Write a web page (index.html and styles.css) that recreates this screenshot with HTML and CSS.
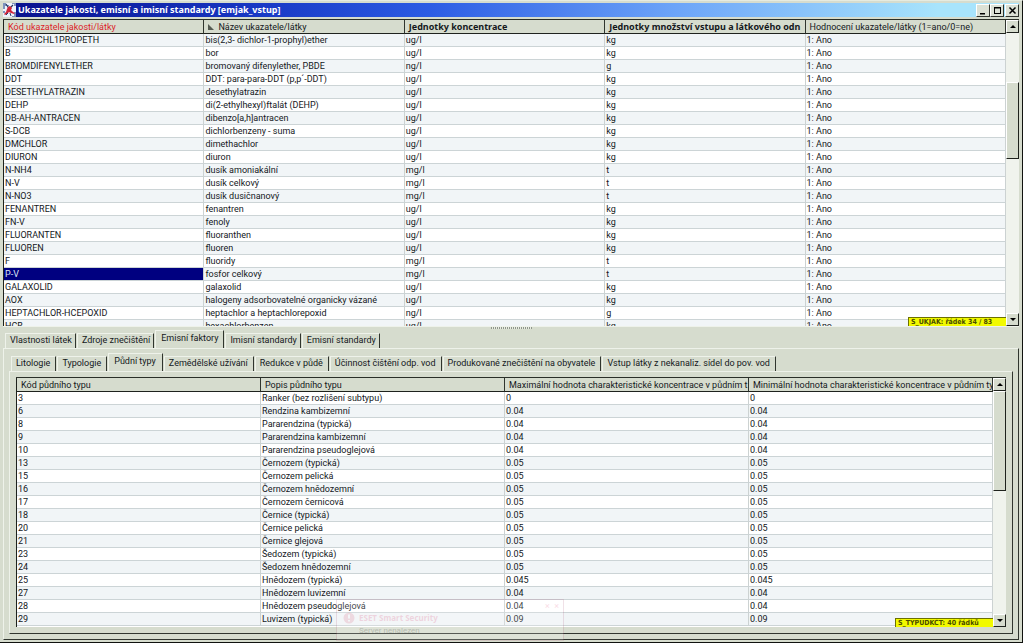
FILE: index.html
```html
<!DOCTYPE html>
<html lang="cs">
<head>
<meta charset="utf-8">
<title>Ukazatele jakosti, emisní a imisní standardy</title>
<link rel="stylesheet" href="styles.css">
</head>
<body>
<main class="window">
  <header class="titlebar">
    <svg class="app-icon" width="13" height="14" viewBox="0 0 13 14" aria-hidden="true">
      <rect width="13" height="14" fill="#eef3fb"/>
      <path d="M0 0h3v2h3v1H2v3H0zM9 0h4v3h-2V1H9zM0 8h2v2H0zM11 9h2v5H9v-1h2z" fill="#7d93bd"/>
      <path d="M3 1l2 3 1 2M10 2L7 5" stroke="#25345e" stroke-width="1.2" fill="none"/>
      <path d="M5 4l2-1 2 2-1 2 2 2 2 1-1 1-3-1-2-1-2 2-2 1-1-1 2-2 1-3z" fill="#d0283c"/>
      <path d="M3 12l2-2M7 10l1 3" stroke="#2b3f6d" fill="none"/>
    </svg>
    <h1 class="title">Ukazatele jakosti, emisní a imisní standardy [emjak_vstup]</h1>
    <div class="window-buttons">
      <button class="win-btn" aria-label="Minimalizovat"><svg width="9" height="9"><path d="M1 7h5v1.5H1z"/></svg></button>
      <button class="win-btn" aria-label="Maximalizovat"><svg width="9" height="9"><path d="M1 1h7v7H1zM2 2.500v4.500h5V2.500z" fill-rule="evenodd"/></svg></button>
      <button class="win-btn close" aria-label="Zavřít"><svg width="9" height="9"><path d="M1.500 1.500l6 6M7.500 1.500l-6 6" stroke="#000" stroke-width="1.5"/></svg></button>
    </div>
  </header>

  <section class="grid-pane top-pane">
    <div class="grid-view">
      <table class="grid" id="indicators">
        <thead><tr>
          <th class="key">Kód ukazatele jakosti/látky</th>
          <th><svg class="sort" width="6" height="6" aria-hidden="true"><path d="M0 0l6 6H0z" fill="#555b52"/></svg>Název ukazatele/látky</th>
          <th class="strong">Jednotky koncentrace</th>
          <th class="strong">Jednotky množství vstupu a látkového odn</th>
          <th>Hodnocení ukazatele/látky (1=ano/0=ne)</th>
        </tr></thead>
        <tbody></tbody>
      </table>
      <output class="status">S_UKJAK: řádek 34 / 83</output>
    </div>
    <div class="scrollbar">
      <button class="scroll-btn" aria-label="Nahoru"><svg width="6" height="4"><path d="M3 0l3 3H0z"/></svg></button>
      <div class="track"><div class="space-before"></div><div class="thumb"></div><div class="space-after"></div></div>
      <button class="scroll-btn" aria-label="Dolů"><svg width="6" height="4"><path d="M0 0h6L3 3z"/></svg></button>
    </div>
  </section>

  <div class="splitter"><span class="grip"></span></div>

  <section class="lower">
    <nav class="tabs outer-tabs" role="tablist">
      <button class="tab" role="tab">Vlastnosti látek</button>
      <button class="tab" role="tab">Zdroje znečištění</button>
      <button class="tab active" role="tab" aria-selected="true">Emisní faktory</button>
      <button class="tab" role="tab">Imisní standardy</button>
      <button class="tab" role="tab">Emisní standardy</button>
    </nav>
    <div class="panel outer-panel">
      <nav class="tabs inner-tabs" role="tablist">
        <button class="tab" role="tab">Litologie</button>
        <button class="tab" role="tab">Typologie</button>
        <button class="tab active" role="tab" aria-selected="true">Půdní typy</button>
        <button class="tab" role="tab">Zemědělské užívání</button>
        <button class="tab" role="tab">Redukce v půdě</button>
        <button class="tab" role="tab">Účinnost čištění odp. vod</button>
        <button class="tab" role="tab">Produkované znečištění na obyvatele</button>
        <button class="tab" role="tab">Vstup látky z nekanaliz. sídel do pov. vod</button>
      </nav>
      <div class="panel inner-panel">
        <div class="grid-pane soil-pane">
          <div class="grid-view">
            <table class="grid" id="soils">
              <thead><tr>
                <th>Kód půdního typu</th>
                <th>Popis půdního typu</th>
                <th>Maximální hodnota charakteristické koncentrace v půdním t</th>
                <th>Minimální hodnota charakteristické koncentrace v půdním ty</th>
              </tr></thead>
              <tbody></tbody>
            </table>
            <output class="status">S_TYPUDKCT: 40 řádků</output>
          </div>
          <div class="scrollbar">
            <button class="scroll-btn" aria-label="Nahoru"><svg width="6" height="4"><path d="M3 0l3 3H0z"/></svg></button>
            <div class="track"><div class="thumb"></div><div class="space-after"></div></div>
            <button class="scroll-btn" aria-label="Dolů"><svg width="6" height="4"><path d="M0 0h6L3 3z"/></svg></button>
          </div>
        </div>
      </div>
    </div>
  </section>

  <aside class="toast">
    <svg width="12" height="12" aria-hidden="true"><circle cx="6" cy="6" r="5.500" fill="#e0607a"/><path d="M5 2.500h2v4H5zM5 8h2v1.500H5z" fill="#fff"/></svg>
    <div><strong class="toast-title">ESET Smart Security</strong><p class="toast-text">Server nenalezen</p></div>
    <span class="toast-controls">×&nbsp;&nbsp;×</span>
  </aside>
</main>
<script src="app.js"></script>
</body>
</html>
```
FILE: styles.css
```css
* { box-sizing: border-box; }
body {
  margin: 0;
  font-family: Roboto, "DejaVu Sans Condensed", sans-serif;
  font-size: 9px;
  line-height: 12px;
  color: #14181c;
}
button { font: inherit; color: inherit; margin: 0; padding: 0; border: 0; background: none; }

.window {
  position: relative;
  display: flex;
  flex-direction: column;
  height: 100vh;
  overflow: hidden;
  padding: 3px 3px 2px;
  background: #d6dcce;
  border-top: 1px solid #e6ebe0;
  border-right: 1px solid #10120f;
  border-bottom: 1px solid #10120f;
}

.titlebar {
  display: flex;
  align-items: center;
  gap: 2px;
  flex: none;
  height: 14px;
  margin-top: -1px;
  background: linear-gradient(90deg, #08108c, #1838c4 25%, #2c5ce4 42%, #6ca4f8 66%, #a8e4fc 92%, #a8e4fc);
}
.app-icon { flex: none; }
.title {
  flex: 1;
  margin: 0;
  font: bold 9px/14px "Noto Sans", sans-serif;
  color: #fff;
  white-space: nowrap;
}
.window-buttons { display: flex; height: 13px; }
.win-btn {
  display: grid;
  place-items: center;
  width: 14px;
  height: 13px;
  background: #dce1d5;
  border: 1px solid;
  border-color: #fff #30342e #30342e #fff;
}
.win-btn.close { margin-left: 1px; }

.grid-pane { display: flex; min-height: 0; border-top: 1px solid #2a2f28; }
.top-pane { flex: 309 1 0; margin-top: 2px; border-bottom: 1px solid #eef2ea; }
.grid-view { position: relative; flex: 1; min-width: 0; overflow: hidden; background: #fff; border-left: 1px solid #1e221d; }
.grid { width: 100%; table-layout: fixed; border-collapse: separate; border-spacing: 0; }
.grid th, .grid td { overflow: hidden; white-space: nowrap; text-align: left; font-weight: normal; }
.grid th {
  height: 14px;
  padding: 0 0 0 4px;
  line-height: 12px;
  background: #d6dcce;
  border-right: 1px solid #30352e;
  border-bottom: 1px solid #1e221d;
}
.grid td {
  height: 13px;
  padding: 0 1px;
  border-right: 1px solid #ccd2d2;
  border-bottom: 1px solid #ccd4d6;
}
.grid tr.tinted td { background: #f1f5f7; }
.grid tr td.selected { background: #000080; color: #dfe4f4; }
.grid th.key { color: #dc1c28; }
.grid th.strong { font-family: "Noto Sans", sans-serif; font-weight: bold; }
.sort { margin: 0 4px 0 0; }

.status {
  position: absolute;
  right: 0;
  bottom: 0;
  width: 98px;
  height: 9px;
  padding-left: 2px;
  overflow: hidden;
  font: bold 7px/8px "DejaVu Sans Condensed", sans-serif;
  white-space: nowrap;
  color: #4a4c00;
  background: #f2fa00;
  border-top: 1px solid #6c7000;
  border-left: 1px solid #6c7000;
}

.scrollbar { display: flex; flex-direction: column; flex: none; width: 13px; background: #f0f3ed; }
.scroll-btn {
  display: grid;
  place-items: center;
  flex: none;
  width: 13px;
  height: 13px;
  background: #d6dcce;
  border: 1px solid;
  border-color: #fff #1e221d #1e221d #fff;
}
.track { display: flex; flex-direction: column; flex: 1; min-height: 0; }
.thumb { flex: 76 1 0; background: #d6dcce; border: 1px solid; border-color: #fff #1e221d #1e221d #fff; }
.space-before { flex: 50 1 0; }
.space-after { flex: 157 1 0; }
.soil-pane .thumb { flex-grow: 98; }
.soil-pane .space-after { flex-grow: 124; }

.splitter { display: flex; justify-content: center; flex: none; height: 3px; }
.grip { width: 41px; height: 2px; background: repeating-linear-gradient(90deg, #8f968a 0 1px, #e8ece3 1px 2px); }

.lower { display: flex; flex-direction: column; flex: 313 1 0; min-height: 0; }
.tabs { display: flex; align-items: flex-end; flex: none; height: 18px; }
.tab {
  height: 15px;
  padding: 0 5px 2px 4px;
  margin-right: 1px;
  border-top: 1px solid #eef2ea;
  border-left: 1px solid #eef2ea;
  border-right: 1px solid #30352e;
  white-space: nowrap;
}
.tab.active { height: 18px; padding: 0 6px 4px 5px; }
.inner-tabs, .outer-tabs { padding-left: 2px; }
.outer-tabs .tab { padding-right: 3px; }
.outer-tabs .tab.active { padding-right: 5px; }
.panel { display: flex; flex-direction: column; flex: 1; min-height: 0; border: 1px solid; border-color: #eef2ea #30352e #30352e #eef2ea; }
.outer-panel { padding: 4px 5px 5px; }
.inner-panel { padding: 5px 6px 6px; }
.soil-pane { flex: 1; }

.toast {
  position: absolute;
  left: 336px;
  bottom: 1px;
  display: flex;
  gap: 4px;
  width: 228px;
  height: 42px;
  padding: 12px 4px 0 6px;
  border: 1px solid #b06080;
  background: #fff;
  opacity: 0.18;
  pointer-events: none;
}
.toast-title { display: block; font: bold 8px/12px "Noto Sans", sans-serif; color: #e04070; }
.toast-text { margin: 1px 0 0; font-size: 8px; line-height: 12px; }
.toast-controls { margin-left: auto; margin-top: -12px; color: #e04070; }
```
FILE: app.js
```js
const indicators = [
  ["BIS23DICHL1PROPETH", "bis(2,3- dichlor-1-prophyl)ether", "ug/l", "kg"],
  ["B", "bor", "ug/l", "kg"],
  ["BROMDIFENYLETHER", "bromovaný difenylether, PBDE", "ng/l", "g"],
  ["DDT", "DDT: para-para-DDT (p,p´-DDT)", "ug/l", "kg"],
  ["DESETHYLATRAZIN", "desethylatrazin", "ug/l", "kg"],
  ["DEHP", "di(2-ethylhexyl)ftalát (DEHP)", "ug/l", "kg"],
  ["DB-AH-ANTRACEN", "dibenzo[a,h]antracen", "ug/l", "kg"],
  ["S-DCB", "dichlorbenzeny - suma", "ug/l", "kg"],
  ["DMCHLOR", "dimethachlor", "ug/l", "kg"],
  ["DIURON", "diuron", "ug/l", "kg"],
  ["N-NH4", "dusík amoniakální", "mg/l", "t"],
  ["N-V", "dusík celkový", "mg/l", "t"],
  ["N-NO3", "dusík dusičnanový", "mg/l", "t"],
  ["FENANTREN", "fenantren", "ug/l", "kg"],
  ["FN-V", "fenoly", "ug/l", "kg"],
  ["FLUORANTEN", "fluoranthen", "ug/l", "kg"],
  ["FLUOREN", "fluoren", "ug/l", "kg"],
  ["F", "fluoridy", "mg/l", "t"],
  ["P-V", "fosfor celkový", "mg/l", "t"],
  ["GALAXOLID", "galaxolid", "ug/l", "kg"],
  ["AOX", "halogeny adsorbovatelné organicky vázané", "ug/l", "kg"],
  ["HEPTACHLOR-HCEPOXID", "heptachlor a heptachlorepoxid", "ng/l", "g"],
  ["HCB", "hexachlorbenzen", "ug/l", "kg"]
].map(row => [...row, "1: Ano"]);

const soils = [
  ["3", "Ranker (bez rozlišení subtypu)", "0"],
  ["6", "Rendzina kambizemní", "0.04"],
  ["8", "Pararendzina (typická)", "0.04"],
  ["9", "Pararendzina kambizemní", "0.04"],
  ["10", "Pararendzina pseudoglejová", "0.04"],
  ["13", "Černozem (typická)", "0.05"],
  ["15", "Černozem pelická", "0.05"],
  ["16", "Černozem hnědozemní", "0.05"],
  ["17", "Černozem černicová", "0.05"],
  ["18", "Černice (typická)", "0.05"],
  ["20", "Černice pelická", "0.05"],
  ["21", "Černice glejová", "0.05"],
  ["23", "Šedozem (typická)", "0.05"],
  ["24", "Šedozem hnědozemní", "0.05"],
  ["25", "Hnědozem (typická)", "0.045"],
  ["27", "Hnědozem luvizemní", "0.04"],
  ["28", "Hnědozem pseudoglejová", "0.04"],
  ["29", "Luvizem (typická)", "0.09"]
].map(row => [...row, row[2]]);

function fill(id, rows, tintedParity, selectedCode) {
  const body = document.querySelector(`#${id} tbody`);
  rows.forEach((row, i) => {
    const tr = body.insertRow();
    if (i % 2 === tintedParity) tr.className = "tinted";
    row.forEach((text, col) => {
      const td = tr.insertCell();
      td.textContent = text;
      if (col === 0 && text === selectedCode) td.className = "selected";
    });
  });
}

fill("indicators", indicators, 0, "P-V");
fill("soils", soils, 1);
```
